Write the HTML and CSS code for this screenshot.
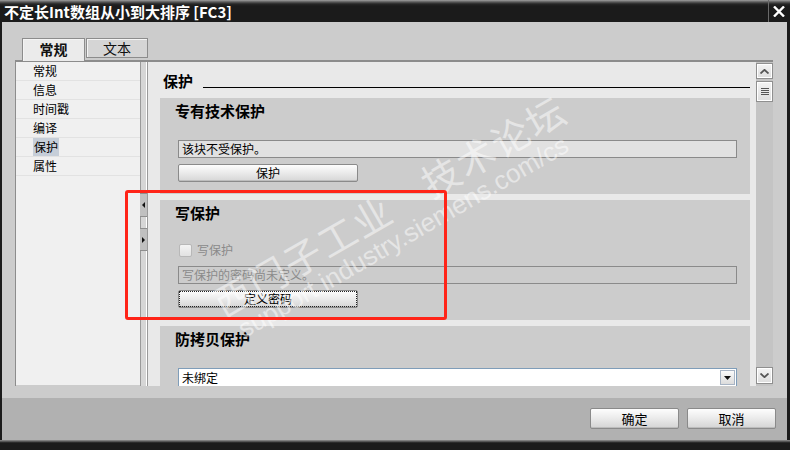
FILE: index.html
```html
<!DOCTYPE html>
<html lang="zh-CN">
<head>
<meta charset="utf-8">
<title>不定长Int数组从小到大排序 [FC3]</title>
<link rel="stylesheet" href="styles.css">
</head>
<body>
<div class="window">
  <div class="titlebar">
    <span class="title">不定长Int数组从小到大排序 [FC3]</span>
    <span class="close"><svg width="12" height="11" viewBox="0 0 12 11"><path d="M1 0.5 L11 10.5 M11 0.5 L1 10.5" stroke="#fff" stroke-width="2.4" fill="none"/></svg></span>
  </div>
  <div class="main">
    <div class="tabs">
      <div class="tab active">常规</div>
      <div class="tab">文本</div>
    </div>
    <div class="panel">
      <ul class="nav">
        <li>常规</li>
        <li>信息</li>
        <li>时间戳</li>
        <li>编译</li>
        <li><span class="sel">保护</span></li>
        <li>属性</li>
      </ul>
      <div class="splitter">
        <span class="sbtn sb1"><svg width="4" height="6" viewBox="0 0 4 6"><path d="M3 0 L0 3 L3 6 Z" fill="#111"/></svg></span>
        <span class="sbtn sb2"><svg width="4" height="6" viewBox="0 0 4 6"><path d="M0 0 L3 3 L0 6 Z" fill="#111"/></svg></span>
      </div>
      <div class="content">
        <div class="pagehead"><span class="ph">保护</span><i class="rule"></i></div>
        <section class="sec s1">
          <h3>专有技术保护</h3>
          <div class="field">该块不受保护。</div>
          <div class="btn">保护</div>
        </section>
        <section class="sec s2">
          <h3>写保护</h3>
          <div class="chkrow"><span class="chk"></span><span class="chklbl">写保护</span></div>
          <div class="field disabled">写保护的密码尚未定义。</div>
          <div class="btn focus">定义密码</div>
        </section>
        <section class="sec s3">
          <h3>防拷贝保护</h3>
          <div class="combo"><span class="cval">未绑定</span><span class="carrow"><svg width="7" height="4" viewBox="0 0 7 4"><path d="M0 0 L7 0 L3.5 4 Z" fill="#111"/></svg></span></div>
        </section>
      </div>
      <div class="vscroll">
        <span class="vbtn up"><svg width="9" height="5" viewBox="0 0 9 5"><path d="M0.5 4.5 L4.5 0.8 L8.5 4.5" stroke="#555" stroke-width="1.8" fill="none"/></svg></span>
        <span class="vbtn thumb"><svg width="8" height="8" viewBox="0 0 8 8"><path d="M0 0.5 H8 M0 2.5 H8 M0 4.5 H8 M0 6.5 H8" stroke="#555" stroke-width="1"/></svg></span>
        <span class="vbtn down"><svg width="9" height="5" viewBox="0 0 9 5"><path d="M0.5 0.5 L4.5 4.2 L8.5 0.5" stroke="#555" stroke-width="1.8" fill="none"/></svg></span>
      </div>
    </div>
  </div>
  <div class="footer">
    <div class="fbtn">确定</div>
    <div class="fbtn">取消</div>
  </div>
  <div class="bottomedge"></div>
  <div class="watermark">
    <div class="wm1">西门子工业　技术论坛</div>
    <div class="wm2">support.industry.siemens.com/cs</div>
  </div>
  <div class="redbox"></div>
</div>
</body>
</html>
```
FILE: styles.css
```css
* { box-sizing: border-box; }
html, body { margin: 0; padding: 0; background: #1b1b1b; }
body { font-family: "Noto Sans CJK SC", "Liberation Sans", sans-serif; font-size: 12px; color: #000; }
.window { position: relative; width: 790px; height: 450px; background: #1b1b1b; display: flex; flex-direction: column; overflow: hidden; }

.titlebar { height: 22px; flex: none; display: flex; align-items: center; justify-content: space-between;
  background: linear-gradient(#a0a0a0 0, #5a5a5a 2px, #262626 4px, #1b1b1b 6px); }
.title { color: #fff; font-size: 15px; font-weight: bold; padding-left: 4px; line-height: 22px; padding-top: 1px; }
.close { width: 21px; height: 22px; border-left: 1px solid #6a6a6a; display: flex; align-items: center; justify-content: center; margin-right: 1px; }

.main { flex: none; height: 376px; margin: 0 3px 0 2px; background: #cccccc; display: flex; flex-direction: column; }
.tabs { height: 38px; flex: none; display: flex; align-items: flex-start; padding: 16px 0 0 20px; }
.tab { height: 20px; width: 62px; margin-left: 1px; background: #d5d5d5; border: 1px solid #8c8c8c; box-shadow: inset 1px 1px 0 #f4f4f4;
  font-size: 14px; line-height: 18px; text-align: center; color: #111; }
.tab.active { margin-left: 0; width: 63px; height: 23px; background: #ebebeb; border-bottom: none; font-weight: bold; position: relative; z-index: 1; line-height: 21px; }

.panel { flex: none; width: 758px; height: 326px; margin-left: 13px; display: flex; border-top: 2px solid #8c8c8c; border-left: 1px solid #8c8c8c; }
.nav { list-style: none; margin: 0; padding: 0; width: 124px; flex: none; background: #f0f0f0; height: 323px; }
.nav li { height: 19px; line-height: 18px; border-bottom: 1px solid #e2e2e2; padding-left: 17px; font-size: 12px; }
.nav .sel { background: #c6ced8; display: inline-block; padding: 0 1px; line-height: 18px; }

.splitter { width: 8px; flex: none; display: flex; flex-direction: column;
  background: linear-gradient(90deg, #9a9a9a 0 1px, #d6d6d6 1px 6px, #ffffff 6px 7px, #9a9a9a 7px 8px); }
.sbtn { width: 7px; display: flex; align-items: center; justify-content: center; background: #c0c0c0; border-top: 1px solid #8e8e8e; border-bottom: 1px solid #8e8e8e; }
.sb1 { margin-top: 131px; height: 24px; }
.sb2 { margin-top: 11px; height: 23px; }

.content { width: 608px; flex: none; background: #e9e9e9; padding: 0 6px 0 12px; overflow: hidden; height: 324px; }
.pagehead { height: 36px; display: flex; align-items: flex-end; padding: 0 0 7px 3px; }
.ph { font-size: 15px; font-weight: bold; line-height: 20px; }
.rule { flex: 1; height: 1px; background: #000; margin: 0 0 3px 10px; }

.sec { background: #cccccc; margin-bottom: 6px; padding: 3px 13px 12px 18px; }
.sec h3 { margin: 0 0 0 -3px; font-size: 15px; font-weight: bold; line-height: 20px; height: 20px; }
.field { height: 18px; margin-top: 19px; border: 1px solid #8a8a8a; background: #e1e1e1; font-size: 12px; line-height: 16px; padding-left: 3px; }
.field.disabled { background: #cccccc; color: #8a8a8a; margin-top: 8px; }
.btn { width: 180px; height: 18px; margin-top: 6px; border: 1px solid #8a8a8a; border-radius: 2px; text-align: center; font-size: 12px; line-height: 16px;
  background: linear-gradient(#fdfdfd, #ececec 45%, #d6d6d6); box-shadow: inset 0 -1px 0 #bdbdbd; }
.btn.focus { outline: 1px dotted #222; outline-offset: -2px; }
.chkrow { margin-top: 19px; height: 16px; display: flex; align-items: center; padding-left: 1px; }
.chk { width: 13px; height: 13px; border: 1px solid #b8b8b8; border-radius: 2px; background: linear-gradient(#f4f4f4, #e2e2e2); }
.chklbl { margin-left: 5px; color: #8a8a8a; font-size: 12px; line-height: 16px; }
.combo { margin-top: 19px; height: 19px; border: 1px solid #7f9db9; background: #fff; display: flex; align-items: center; justify-content: space-between; }
.cval { padding-left: 3px; font-size: 12px; line-height: 17px; }
.carrow { width: 15px; height: 15px; margin-right: 1px; border: 1px solid #a8b4c4; background: linear-gradient(#fafafa, #dcdcdc); display: flex; align-items: center; justify-content: center; }

.vscroll { width: 17px; flex: none; background: #c4c4c4; display: flex; flex-direction: column; height: 324px; }
.vbtn { width: 17px; display: flex; align-items: center; justify-content: center; border: 1px solid #8f8f8f; box-shadow: inset 0 0 0 1px #ffffff;
  background: linear-gradient(#f4f4f4, #dddddd); }
.up { margin-top: 1px; height: 16px; }
.thumb { margin-top: 2px; height: 21px; }
.down { margin-top: auto; margin-bottom: 2px; height: 17px; }

.footer { flex: none; height: 42px; margin: 0 3px 0 2px; background: #b1b1b1; display: flex; align-items: center; justify-content: flex-end; gap: 8px; padding: 0 11px 1px 0; }
.fbtn { width: 89px; height: 21px; border: 1px solid #8a8a8a; border-radius: 2px; text-align: center; font-size: 13px; line-height: 19px;
  background: linear-gradient(#fdfdfd, #ececec 45%, #d4d4d4); box-shadow: inset 0 -1px 0 #bcbcbc; }
.bottomedge { flex: none; height: 10px; background: linear-gradient(#8c8c8c 0, #707070 1px, #3c3c3c 2px, #1b1b1b 3px); }

.redbox { position: absolute; left: 125px; top: 190px; width: 322px; height: 130px; border: 3px solid #ff2418; border-radius: 3px; pointer-events: none; }
.watermark { position: absolute; left: 206px; top: 288px; transform: rotate(-30deg); transform-origin: 0 0; color: rgba(255,255,255,0.5); white-space: nowrap; pointer-events: none; }
.wm1 { font-family: "Noto Sans CJK SC", sans-serif; font-size: 38px; line-height: 40px; letter-spacing: 2px; }
.wm2 { font-family: "Liberation Sans", sans-serif; font-size: 26px; line-height: 28px; margin-left: 8px; }
```
